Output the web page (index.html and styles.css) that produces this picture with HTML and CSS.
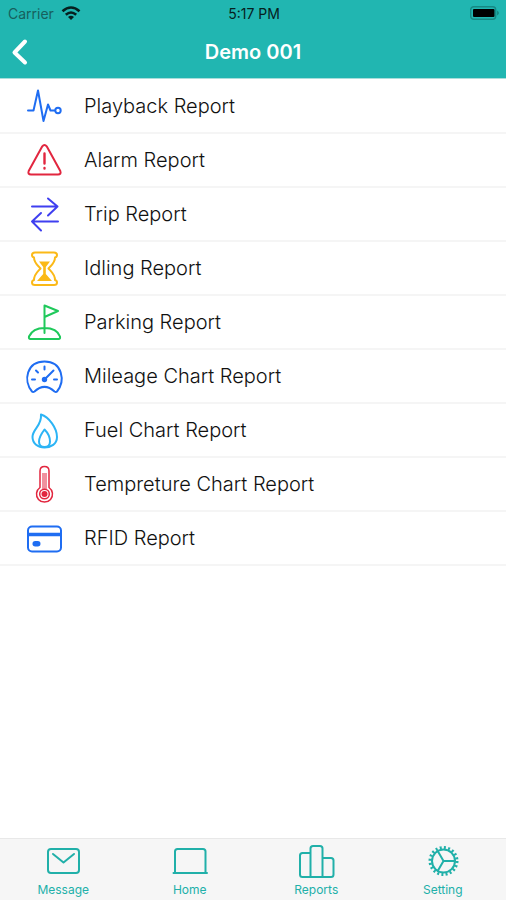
FILE: index.html
```html
<!DOCTYPE html>
<html lang="en">
<head>
<meta charset="utf-8">
<meta name="viewport" content="width=device-width, initial-scale=1">
<title>Demo 001</title>
<link rel="stylesheet" href="styles.css">
</head>
<body>
<header class="top">
  <div class="status">
    <div class="carrier">
      <span>Carrier</span>
      <svg width="20" height="14" viewBox="0 0 20 14" fill="none" stroke="#06201f" stroke-width="2.6"><path d="M1.5 5.2Q10-2.2 18.5 5.2M4.800 8.800Q10 4.200 15.200 8.800"/><path d="M7 11Q10 8.400 13 11L10 14Z" fill="#06201f" stroke="none"/></svg>
    </div>
    <time class="clock">5:17 PM</time>
    <svg class="battery" width="30" height="14" viewBox="0 0 30 14"><rect x=".7" y=".7" width="25" height="12.600" rx="3" fill="none" stroke="#168984" stroke-width="1.400"/><rect x="3" y="3" width="21.500" height="8" rx="1" fill="#000"/><path d="M27 4.500Q31 7 27 9.500Z" fill="#168984"/></svg>
  </div>
  <div class="bar">
    <button class="back" type="button" aria-label="Back"><svg width="18" height="28" viewBox="0 0 18 28" fill="none" stroke="#fff" stroke-width="4" stroke-linecap="round" stroke-linejoin="round"><path d="M14 3.500L3.500 14.500L14 24.500"/></svg></button>
    <h1 class="title">Demo 001</h1>
  </div>
</header>

<main class="content">
  <ul class="reports">
    <li><a class="row" href="#playback">
      <svg class="icon blue" viewBox="0 0 36 36"><path d="M2 22.500H7.500L12 2.500L17.500 33L22 16.500L24.500 22.500H29"/><circle cx="32" cy="22.500" r="2.700"/></svg>
      <span>Playback Report</span></a></li>
    <li><a class="row" href="#alarm">
      <svg class="icon red" viewBox="0 0 36 36"><path d="M16.300 4.300Q18.500 1.500 20.700 4.300L34.300 29Q35.500 32.500 32 32.500H5Q1.500 32.500 2.700 29Z"/><path d="M18.500 11.500V21.500M18.500 26V26.500" stroke-width="2.400"/></svg>
      <span>Alarm Report</span></a></li>
    <li><a class="row" href="#trip">
      <svg class="icon indigo" viewBox="0 0 36 36"><path d="M6 10.500H31.500M22 2.500L31.500 10.500L22 19.500M32 25.500H6M15 17L6 25.500L15 34.500"/></svg>
      <span>Trip Report</span></a></li>
    <li><a class="row" href="#idling">
      <svg class="icon amber" viewBox="0 0 36 36"><path d="M9 2.500H28Q31 2.500 31 5Q31 7 29 7.500C29 13 25 15.500 22.500 18.500C25 21.500 29 24 29 30Q31 30.500 31 32.500Q31 35 28 35H9Q6 35 6 32.500Q6 30.500 8 30C8 24 12 21.500 14.500 18.500C12 15.500 8 13 8 7.500Q6 7 6 5Q6 2.500 9 2.500Z"/><path class="solid" d="M13 11.500H24L19.800 17V24L26 31H11L17.200 24V17Z"/></svg>
      <span>Idling Report</span></a></li>
    <li><a class="row" href="#parking">
      <svg class="icon green" viewBox="0 0 36 36"><path d="M18.500 29V1.500L32 7L18.500 13M4.500 35Q2.500 35 3 32.500C5.500 27 11 24 18.500 24S32 27 34 32.500Q34.500 35 32.500 35Z"/></svg>
      <span>Parking Report</span></a></li>
    <li><a class="row" href="#mileage">
      <svg class="icon blue" viewBox="0 0 36 36"><path d="M6 33.500C-3 23 .5 3.500 18.500 3.500S39.500 23 31 33.500Q30 34.500 28.500 33.500C22 27.500 15 27.500 8.500 33.500Q7 34.500 6 33.500Z"/><path d="M6 21.500H9M28 21.500H31M18.500 8.500V11.500M10 12.500L12 14.500M18.500 21.500L27.500 12.500"/><circle class="solid" cx="18.500" cy="21.500" r="2.700"/></svg>
      <span>Mileage Chart Report</span></a></li>
    <li><a class="row" href="#fuel">
      <svg class="icon sky" viewBox="0 0 36 36"><path d="M15 2.500C23 5 31 16 31 25C31 32 25 35.500 18.500 35.500S6.500 31.500 6.500 25C6.500 17 16 14 15 2.500Z"/><path d="M18.500 17.500C22 21 24 25 24 29.500Q24 35 18.500 35T13 29.500C13 25 15.500 21.500 18.500 17.500Z"/></svg>
      <span>Fuel Chart Report</span></a></li>
    <li><a class="row" href="#temperature">
      <svg class="icon red" viewBox="0 0 36 36"><path class="thin" d="M14 21.500V5Q14 .5 18.500 .5T23 5V21.500A8 8 0 1 1 14 21.500Z"/><path d="M18.500 7V23" stroke-width="5" stroke-linecap="butt" opacity=".5"/><circle class="thin" cx="18.500" cy="28" r="4.800"/><circle class="solid" cx="18.500" cy="28" r="3"/></svg>
      <span>Tempreture Chart Report</span></a></li>
    <li><a class="row" href="#rfid">
      <svg class="icon blue" viewBox="0 0 36 36"><rect x="2" y="6.500" width="33" height="25" rx="4"/><path d="M2 14.500H35" stroke-width="3.500" stroke-linecap="butt"/><rect class="solid" x="6.500" y="21" width="8" height="5.500" rx="2.700"/></svg>
      <span>RFID Report</span></a></li>
  </ul>
</main>

<nav class="tabs">
  <a class="tab" href="#message">
    <svg class="tab-icon" viewBox="0 0 36 36"><rect x="3" y="6" width="31" height="24" rx="3"/><path d="M8 11L18.500 19.500L29 11"/></svg>
    <span>Message</span></a>
  <a class="tab" href="#home">
    <svg class="tab-icon" viewBox="0 0 36 36"><path d="M3 29V8.500Q3 6 5.500 6H31Q33.500 6 33.500 8.500V29M1.500 30H35"/></svg>
    <span>Home</span></a>
  <a class="tab" href="#reports">
    <svg class="tab-icon" viewBox="0 0 36 36"><path d="M12.500 10H4.500Q2 10 2 12.500V31.500Q2 34 4.500 34H33Q35.500 34 35.500 31.500V17.500Q35.500 15 33 15H24.500M12.500 34V5.500Q12.500 3 15 3H22Q24.500 3 24.500 5.500V34"/></svg>
    <span>Reports</span></a>
  <a class="tab" href="#setting">
    <svg class="tab-icon" viewBox="0 0 36 36"><circle cx="18.500" cy="18" r="11.500"/><circle cx="18.500" cy="18" r="13.500" stroke-dasharray="2 2.241" stroke-width="3" stroke-linecap="butt"/><path d="M18.500 18H30M18.500 18L12.700 8M18.500 18L12.700 28"/></svg>
    <span>Setting</span></a>
</nav>
</body>
</html>
```
FILE: styles.css
```css
* {
  box-sizing: border-box;
}

body {
  margin: 0;
  min-height: 100vh;
  display: flex;
  flex-direction: column;
  background: #fff;
  color: #111;
  font-family: Inter, "Liberation Sans", sans-serif;
}

a {
  color: inherit;
  text-decoration: none;
}

svg {
  display: block;
}

.top {
  background: #21b6b1;
  border-bottom: 1px solid #a9dedb;
}

.status {
  display: grid;
  grid-template-columns: 1fr auto 1fr;
  align-items: center;
  height: 26px;
  padding: 0 6px 0 8px;
  font-size: 14px;
  color: #06201f;
}

.carrier {
  display: flex;
  align-items: center;
  gap: 7px;
  color: #17605d;
}

.battery {
  justify-self: end;
}

.bar {
  display: grid;
  grid-template-columns: 48px 1fr 48px;
  align-items: center;
  height: 52px;
}

.back {
  padding: 0 0 0 11px;
  border: 0;
  background: none;
  cursor: pointer;
}

.title {
  margin: 0;
  text-align: center;
  color: #fff;
  font-size: 20px;
  font-weight: 600;
}

.content {
  flex: 1;
}

.reports {
  margin: 0;
  padding: 1px 0 0;
  list-style: none;
}

.row {
  display: flex;
  align-items: center;
  gap: 22px;
  height: 54px;
  padding: 0 26px;
  border-bottom: 2px solid #f5f5f5;
  font-size: 20px;
  font-weight: 300;
}

.icon,
.tab-icon {
  width: 36px;
  height: 36px;
  flex: none;
  overflow: visible;
  fill: none;
  stroke: currentColor;
  stroke-width: 2;
  stroke-linecap: round;
  stroke-linejoin: round;
}

.solid {
  fill: currentColor;
  stroke: none;
}

.thin {
  stroke-width: 1.5px;
}

.blue { color: #1f6df2; }
.red { color: #e2263f; }
.indigo { color: #3f3ff0; }
.amber { color: #fbb917; }
.green { color: #1fc95b; }
.sky { color: #2cb4f5; }

.tabs {
  display: grid;
  grid-template-columns: repeat(4, 1fr);
  height: 62px;
  border-top: 1px solid #e8e8e8;
  background: #f6f6f6;
  color: #21b0a9;
}

.tab {
  display: flex;
  flex-direction: column;
  align-items: center;
  padding-top: 4px;
  font-size: 12px;
  line-height: 22px;
}
```
